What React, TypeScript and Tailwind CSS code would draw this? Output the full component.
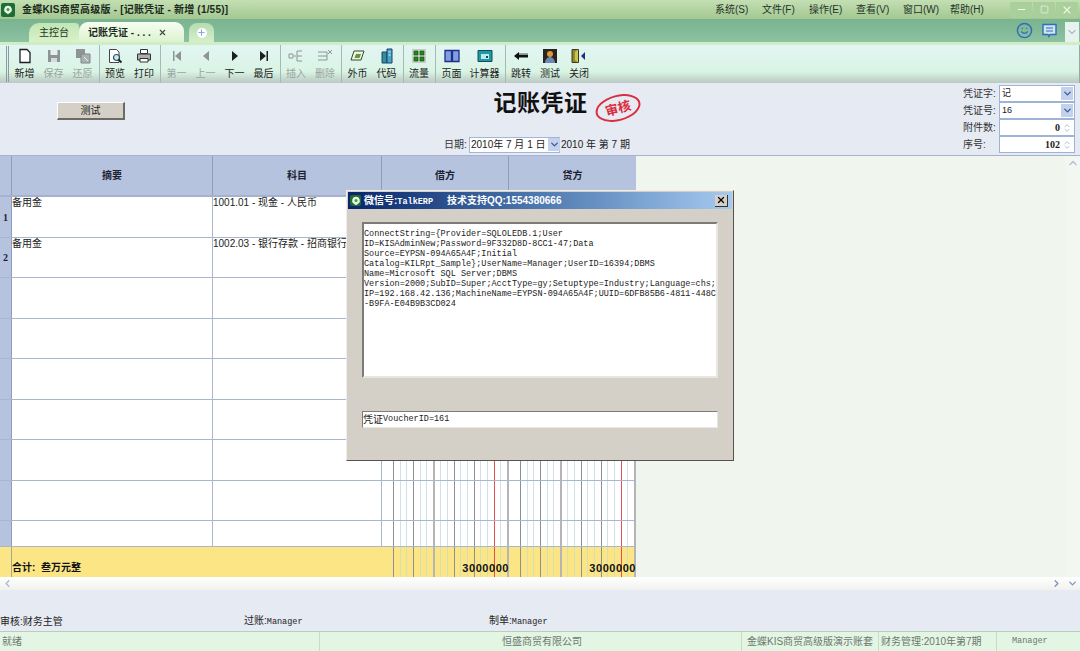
import { ReactNode } from 'react';
import { ChevronDown, ChevronLeft, ChevronRight, ChevronUp, ChevronsUpDown, Minus, Plus, Smile, Square, X } from 'lucide-react';

const cjk = "font-['Liberation_Sans','Noto_Sans_CJK_SC',sans-serif]";
const mono = "font-['Liberation_Mono','Noto_Sans_CJK_SC',monospace]";

const ToolIcon = ({ name }: { name: string }) => {
  const gray = '#8d9494';
  const dark = '#1c1f24';
  switch (name) {
    case 'new':
      return <svg width="16" height="16" viewBox="0 0 16 16"><path d="M3 1.5h7l3 3v10H3z" fill="#fff" stroke={dark} strokeWidth="1.3" /></svg>;
    case 'save':
      return <svg width="16" height="16" viewBox="0 0 16 16"><path d="M2 2h12v12H2z" fill={gray} /><path d="M4.5 2h7v5h-7z" fill="#e6eeee" /><path d="M5 10h6v4H5z" fill="#d5dbdb" /></svg>;
    case 'restore':
      return <svg width="16" height="16" viewBox="0 0 16 16"><path d="M1 1h9v9H1z" fill={gray} /><path d="M6 6h9v9H6z" fill="#a9b1b1" stroke="#7f8787" /><path d="M9 9l4 4" stroke="#e5eaea" /></svg>;
    case 'preview':
      return <svg width="16" height="16" viewBox="0 0 16 16"><path d="M2.5 1.5h7l2.5 2.5v10.5h-9.500z" fill="#fff" stroke="#444" /><circle cx="9.500" cy="9.500" r="3" fill="#cfe6ee" stroke="#28506a" strokeWidth="1.2" /><path d="M11.500 11.500l3 3" stroke="#222" strokeWidth="1.800" /></svg>;
    case 'print':
      return <svg width="16" height="16" viewBox="0 0 16 16"><path d="M4.500 1.500h7v4h-7z" fill="#fff" stroke="#333" /><path d="M1.500 6h13v6h-13z" fill="#aab0b0" stroke="#333" /><path d="M4 10.500h8v3.500H4z" fill="#fff" stroke="#333" /></svg>;
    case 'first':
      return <svg width="16" height="16" viewBox="0 0 16 16"><path d="M4 3h1.500v10H4zM12 3v10L6 8z" fill={gray} /></svg>;
    case 'prev':
      return <svg width="16" height="16" viewBox="0 0 16 16"><path d="M11 3v10L5 8z" fill={gray} /></svg>;
    case 'next':
      return <svg width="16" height="16" viewBox="0 0 16 16"><path d="M5 3v10l6-5z" fill={dark} /></svg>;
    case 'last':
      return <svg width="16" height="16" viewBox="0 0 16 16"><path d="M4 3v10l6-5zM10.500 3H12v10h-1.500z" fill={dark} /></svg>;
    case 'insert':
      return <svg width="16" height="16" viewBox="0 0 16 16"><path d="M8 8h-2M9 3h5M9 8h5M9 13h5M9 3v10" stroke={gray} fill="none" /><path d="M1 6h4v4H1z" fill="none" stroke={gray} /></svg>;
    case 'remove':
      return <svg width="16" height="16" viewBox="0 0 16 16"><path d="M1 4h9M1 8h9M1 12h9M10 4v8" stroke={gray} fill="none" /><path d="M11 2l4 4M15 2l-4 4" stroke={gray} /></svg>;
    case 'money':
      return <svg width="16" height="16" viewBox="0 0 16 16"><path d="M4 3h10l-3 9H1z" fill="#eef3e4" stroke="#3a4a2a" /><path d="M6 6h5l-1.500 4h-5z" fill="#5e9a3a" /></svg>;
    case 'code':
      return <svg width="16" height="16" viewBox="0 0 16 16"><path d="M3 4h5v11H3z" fill="#2f8f9a" stroke="#1d4a66" /><path d="M8 1h5v14H8z" fill="#4aa7c0" stroke="#1d3a7a" /><path d="M9.500 4h2M9.500 7h2" stroke="#e6f6ff" /></svg>;
    case 'flow':
      return <svg width="16" height="16" viewBox="0 0 16 16"><path d="M1 1h14v14H1z" fill="#c8cdc4" /><path d="M3 3h4v4H3zM9 3h4v4H9zM3 9h4v4H3zM9 9h4v4H9z" fill="#1d8a1d" stroke="#0e4a0e" strokeWidth=".6" /></svg>;
    case 'page':
      return <svg width="16" height="16" viewBox="0 0 16 16"><path d="M1 2.500h6.500v11H1zM8.500 2.500H15v11H8.500z" fill="#7f9fe0" stroke="#1c2f8a" strokeWidth="1.300" /></svg>;
    case 'calc':
      return <svg width="16" height="16" viewBox="0 0 16 16"><path d="M1 2.500h14v11H1z" fill="#1f9aa5" stroke="#124a5a" /><path d="M4 6h8v5H4z" fill="#bfe9ec" /><path d="M9 8h2v2H9z" fill="#124a5a" /></svg>;
    case 'jump':
      return <svg width="16" height="16" viewBox="0 0 16 16"><path d="M1 8l5-4v2.500h9v3H6V12z" fill="#111" /><path d="M6 5h9v1.500H6z" fill="#9aa5a5" /></svg>;
    case 'test':
      return <svg width="16" height="16" viewBox="0 0 16 16"><path d="M1 1h14v14H1z" fill="#2a241c" /><circle cx="8" cy="6" r="3" fill="#d99a3a" /><path d="M3 15c0-4 3-6 5-6s5 2 5 6z" fill="#6f86b8" /></svg>;
    case 'close':
      return <svg width="16" height="16" viewBox="0 0 16 16"><path d="M1 1.500h6.500v13H1z" fill="#8f8a2a" stroke="#3a3a1a" /><path d="M4 4l3-2.500v13L4 12z" fill="#c9c45a" /><path d="M10 8l4-4v8z" fill="#1c2f8a" /></svg>;
    default:
      return null;
  }
};

const toolGroups = [
  [['new', '新增', 1], ['save', '保存', 0], ['restore', '还原', 0]],
  [['preview', '预览', 1], ['print', '打印', 1]],
  [['first', '第一', 0], ['prev', '上一', 0], ['next', '下一', 1], ['last', '最后', 1]],
  [['insert', '插入', 0], ['remove', '删除', 0]],
  [['money', '外币', 1], ['code', '代码', 1]],
  [['flow', '流量', 1]],
  [['page', '页面', 1], ['calc', '计算器', 1, 'w-[37px]']],
  [['jump', '跳转', 1], ['test', '测试', 1], ['close', '关闭', 1]],
] as [string, string, number, string?][][];

const menus = ['系统(S)', '文件(F)', '操作(E)', '查看(V)', '窗口(W)', '帮助(H)'];

const Logo = ({ size = 'w-[14px] h-[14px]' }: { size?: string }) => (
  <div className={`${size} shrink-0 bg-[#1f6b3a] rounded-[2px] flex items-center justify-center`}>
    <svg viewBox="0 0 12 12" className="w-[10px] h-[10px]">
      <path d="M6 1a4.500 4.500 0 0 1 3 8L6 11 3 9a4.500 4.500 0 0 1 3-8z" fill="#e8f5d8" />
      <circle cx="6" cy="5.500" r="1.800" fill="#3b9a52" />
    </svg>
  </div>
);

// one amount column of the voucher: wide first cell and 17 digit cells
const lineClass = (i: number, onYellow: boolean) => {
  if (i === 15) return 'border-r border-r-[#e2504f]';
  if (i === 6 || i === 17) return 'border-r-2 border-r-[#b5b5b8]';
  if (i === 0 || i === 3 || i === 9 || i === 12) return 'border-r border-r-[#8b8f96]';
  return onYellow ? 'border-r border-r-[#d4dfb6]' : 'border-r border-r-[#cfe2ec]';
};

const digitCells = Array.from({ length: 18 }, (_, i) => i);

const Ledger = ({ amount, yellow = false }: { amount?: string; yellow?: boolean }) => (
  <div className="relative w-[127px] h-full flex items-end justify-end">
    <div className="absolute inset-0 flex">
      {digitCells.map((i) => (
        <div key={i} className={`${i === 0 ? 'w-[12px]' : 'flex-1'} h-full ${lineClass(i, yellow)}`} />
      ))}
    </div>
    {amount && (
      <span className="relative font-['Liberation_Sans'] font-bold text-[11px] tracking-[0.55px] leading-[14px] mb-[2px] text-[#111]">{amount}</span>
    )}
  </div>
);

const rows = [
  { no: '1', summary: '备用金', account: '1001.01 - 现金 - 人民币', h: 'h-[41px]' },
  { no: '2', summary: '备用金', account: '1002.03 - 银行存款 - 招商银行', h: 'h-[40px]' },
  { h: 'h-[41px]' },
  { h: 'h-[40px]' },
  { h: 'h-[41px]' },
  { h: 'h-[40px]' },
  { h: 'h-[41px]' },
  { h: 'h-[40px]' },
  { h: 'h-[26px]' },
];

const Field = ({ label, children }: { label: string; children: ReactNode }) => (
  <div className="flex h-[17px] items-center">
    <span className="w-[36px] text-[10px] text-[#333]">{label}:</span>
    <div className="w-[76px] h-[17px] bg-white border border-[#9fb3d8] flex items-center justify-between px-[2px] text-[9px] text-[#222]">
      {children}
    </div>
  </div>
);

const ComboArrow = () => (
  <span className="w-[12px] h-[13px] bg-[#c3d1ec] flex items-center justify-center -mr-[1px]">
    <ChevronDown size={11} strokeWidth={3} className="text-[#3d5c94]" />
  </span>
);

const dialogText = [
  'ConnectString={Provider=SQLOLEDB.1;User',
  'ID=KISAdminNew;Password=9F332D8D-8CC1-47;Data',
  'Source=EYPSN-094A65A4F;Initial',
  'Catalog=KILRpt_Sample};UserName=Manager;UserID=16394;DBMS',
  'Name=Microsoft SQL Server;DBMS',
  'Version=2000;SubID=Super;AcctType=gy;Setuptype=Industry;Language=chs;',
  'IP=192.168.42.136;MachineName=EYPSN-094A65A4F;UUID=6DFB85B6-4811-448C',
  '-B9FA-E04B9B3CD024',
];

export default function App() {
  return (
    <div className={`w-[1080px] h-[651px] overflow-hidden flex flex-col bg-[#e6eaf2] ${cjk}`}>
      {/* title bar */}
      <div className="h-[19px] shrink-0 flex items-center pl-[1px] bg-gradient-to-b from-[#c3dfb3] to-[#a3c891]">
        <Logo />
        <span className="ml-[7px] text-[10px] font-bold tracking-[0.2px] text-[#1a2a1a] whitespace-pre">金蝶KIS商贸高级版 - [记账凭证 - 新增 (1/55)]</span>
        <div className="ml-auto flex">
          {menus.map((m) => (
            <span key={m} className="w-[47px] text-[10px] text-[#26332a] whitespace-nowrap">{m}</span>
          ))}
        </div>
        <div className="flex ml-[13px] mr-[2px] gap-[1px] h-[16px]">
          <span className="w-[22px] bg-[#a9cf9a] flex items-center justify-center"><Minus size={11} className="text-white" strokeWidth={2} /></span>
          <span className="w-[22px] bg-[#a9cf9a] flex items-center justify-center"><Square size={9} className="text-[#e9f4e2]" /></span>
          <span className="w-[22px] bg-[#a9cf9a] flex items-center justify-center"><X size={12} className="text-[#e9f4e2]" strokeWidth={2.5} /></span>
        </div>
      </div>

      {/* tabs */}
      <div className="h-[23px] shrink-0 flex items-end pl-[29px] bg-gradient-to-b from-[#79b38f] to-[#8cc2a2] relative">
        <div className="w-[50px] h-[19px] rounded-tl-[10px] rounded-tr-[4px] bg-gradient-to-b from-[#c2e6b4] to-[#d9f1c8] flex items-center justify-center text-[10px] text-[#24352a]">主控台</div>
        <div className="w-[105px] h-[20px] rounded-t-[9px] bg-gradient-to-b from-[#f6fdf2] to-[#dcf3cf] flex items-center pl-[9px] text-[10px] font-bold text-[#1a2a1a] whitespace-pre">
          记账凭证 - . . .
          <X size={9} strokeWidth={3} className="ml-[7px] text-[#444]" />
        </div>
        <div className="ml-[5px] w-[25px] h-[19px] rounded-t-[8px] bg-gradient-to-b from-[#b5dcb0] to-[#d6efc8] flex items-center justify-center">
          <span className="w-[10px] h-[10px] bg-white rounded-full flex items-center justify-center"><Plus size={9} strokeWidth={3} className="text-[#8fa8df]" /></span>
        </div>
        <div className="ml-auto h-full flex items-center">
          <Smile size={17} className="text-[#2f6dba] mr-[8px]" />
          <svg width="17" height="17" viewBox="0 0 17 17" className="mr-[7px]">
            <path d="M2 2.500h13v10H9l-1 2-1-2H2z" fill="#cfe6f2" stroke="#2f6dba" strokeWidth="1.400" />
            <path d="M5 6h7M5 9h7" stroke="#2f6dba" strokeWidth="1.200" />
          </svg>
          <span className="w-[14px] h-[20px] self-end bg-[#e8f3ee] flex items-center justify-center"><ChevronDown size={12} className="text-[#6f8fc0]" /></span>
          <span className="w-[1px]" />
        </div>
      </div>
      <div className="h-[3px] shrink-0 bg-[#cfeec4]" />

      {/* toolbar */}
      <div className="h-[38px] shrink-0 flex items-stretch pl-[6px] bg-gradient-to-b from-[#e3f5f3] via-[#d9f4e4] via-70% to-[#b9c9c2] border-r border-[#9aa8a0]">
        <span className="w-[3px] my-[1px] border-x border-[#8d9aa0]" />
        {toolGroups.map((group, gi) => (
          <div key={gi} className={`flex items-stretch pl-[1px] pr-[1.5px] ${gi > 0 ? 'border-l border-[#a8b8b4]' : ''}`}>
            {group.map(([icon, label, on, w]) => (
              <div key={label} className={`${w ?? 'w-[29px]'} flex flex-col items-center pt-[3px]`}>
                <ToolIcon name={icon} />
                <span className={`mt-[4px] text-[10px] leading-[12px] whitespace-nowrap ${on ? 'text-[#222]' : 'text-[#9aa3a3]'}`}>{label}</span>
              </div>
            ))}
          </div>
        ))}
      </div>

      {/* voucher header */}
      <div className="h-[72px] shrink-0 flex bg-[#e6eaf2]">
        <div className="w-[444px] pl-[57px] pt-[19px]">
          <div className="w-[68px] h-[18px] bg-[#d4d0c8] border-r-2 border-b-2 border-r-[#6d6a64] border-b-[#6d6a64] border-t border-l border-t-white border-l-white flex items-center justify-center text-[10px] text-[#222]">测试</div>
        </div>
        <div className="w-[193px] relative flex flex-col items-center">
          <div className="mt-[4px] text-[23px] leading-[28px] font-semibold tracking-[0.5px] text-[#111] font-['Noto_Sans_CJK_SC']">记账凭证</div>
          <div className="absolute left-[151px] top-[12px] w-[46px] h-[26px] rounded-[50%] border-[2.5px] border-[#dc2d3c] -rotate-[15deg] flex items-center justify-center text-[13px] font-bold leading-none text-[#dc2d3c]">审核</div>
          <div className="mt-[21px] flex items-center self-start text-[10px] text-[#333] h-[17px] whitespace-pre">
            <span className="w-[25px]">日期:</span>
            <div className="w-[91px] h-[16px] bg-white border border-[#a3b6da] flex items-center justify-between pl-[1px] text-[#222]">
              <span>2010年 7 月 1 日</span>
              <ComboArrow />
            </div>
            <span className="ml-[1px] text-[#222]">2010 年 第 7 期</span>
          </div>
        </div>
        <div className="ml-auto pt-[2px] pr-[5px] flex flex-col">
          <Field label="凭证字">记<ComboArrow /></Field>
          <Field label="凭证号">16<ComboArrow /></Field>
          <Field label="附件数">
            <span className="ml-auto font-['Liberation_Serif'] font-bold text-[10px]">0</span>
            <ChevronsUpDown size={10} className="text-[#a8b4c8] ml-[2px]" />
          </Field>
          <Field label="序号">
            <span className="ml-auto font-['Liberation_Serif'] font-bold text-[10px]">102</span>
            <ChevronsUpDown size={10} className="text-[#a8b4c8] ml-[2px]" />
          </Field>
        </div>
      </div>

      {/* voucher grid */}
      <div className="relative h-[422px] shrink-0 flex bg-[#f0f5ee] border-t border-[#a7b3cc]">
        <div className="w-[636px] flex flex-col">
          <div className="h-[41px] flex bg-[#b6c3de] text-[10px] font-bold text-[#1c2233] border-b-2 border-[#a4b2cf]">
            <div className="w-[12px] border-r border-[#8f9dbb] bg-[#b6c3de]" />
            <div className="w-[201px] border-r border-[#8f9dbb] flex items-center justify-center">摘要</div>
            <div className="w-[169px] border-r border-[#8f9dbb] flex items-center justify-center">科目</div>
            <div className="w-[127px] border-r border-[#8f9dbb] flex items-center justify-center">借方</div>
            <div className="w-[127px] flex items-center justify-center">贷方</div>
          </div>
          {rows.map((r, i) => (
            <div key={i} className={`${r.h} flex bg-white border-b border-[#a8b6d0] last:border-b-0`}>
              <div className="w-[12px] bg-[#b6c3de] border-r border-[#8f9dbb] flex items-center justify-center font-['Liberation_Serif'] text-[10px] font-bold text-[#1c2233]">{r.no}</div>
              <div className="w-[201px] border-r border-[#a8b6d0] text-[10px] leading-[12px] text-[#222]">{r.summary}</div>
              <div className="w-[169px] border-r border-[#a8b6d0] text-[10px] leading-[12px] text-[#222] whitespace-nowrap overflow-hidden">{r.account}</div>
              <Ledger />
              <Ledger />
            </div>
          ))}
          <div className="h-[30px] flex bg-[#fbe585]">
            <div className="w-[12px] border-r border-[#a5a88c]" />
            <div className="w-[370px] flex items-end pb-[2px] text-[10px] leading-[14px] font-bold text-[#111] whitespace-pre">合计:  叁万元整</div>
            <Ledger amount="3000000" yellow />
            <Ledger amount="3000000" yellow />
          </div>
        </div>
        <div className="flex-1" />
        <div className="w-[15px] flex justify-center pt-[1px] bg-[#f3f7f1]">
          <ChevronUp size={12} strokeWidth={3} className="text-[#b4c2d8]" />
        </div>

        {/* dialog */}
        <div className="absolute left-[346px] top-[34px] w-[388px] h-[271px] bg-[#d4d0c8] border border-[#f0eee8] border-r-[#55534f] border-b-[#55534f] pt-[1px] px-[1px]">
          <div className="h-[17px] flex items-center pl-[2px] pr-[4px] bg-gradient-to-r from-[#0a246a] via-[#4f7ab0] to-[#a6caf0]">
            <Logo size="w-[11px] h-[11px]" />
            <span className="ml-[3px] text-[10px] font-bold text-white whitespace-pre">微信号:<span className={`${mono} text-[8.500px]`}>TalkERP</span>     技术支持QQ:1554380666</span>
            <span className="ml-auto w-[13px] h-[12px] bg-[#d4d0c8] border-r border-b border-[#333] flex items-center justify-center">
              <X size={10} strokeWidth={3} className="text-black" />
            </span>
          </div>
          <div className="mx-[14px] mt-[13px] h-[156px] bg-white border-2 border-[#7d7b76] border-r-[#e8e6e0] border-b-[#e8e6e0] pt-[5px] overflow-hidden">
            <div className={`${mono} text-[8.500px] leading-[10px] text-[#222] whitespace-pre`}>
              {dialogText.map((line) => <div key={line}>{line}</div>)}
            </div>
          </div>
          <div className="mx-[14px] mt-[33px] h-[17px] bg-white border border-[#7d7b76] border-r-[#e8e6e0] border-b-[#e8e6e0] flex items-center text-[10px] text-[#222]">
            凭证<span className={`${mono} text-[8.500px]`}>VoucherID=161</span>
          </div>
        </div>
      </div>

      {/* horizontal scrollbar */}
      <div className="h-[13px] shrink-0 flex items-center px-[2px] bg-gradient-to-b from-[#ffffff] to-[#f1f1ef]">
        <ChevronLeft size={11} strokeWidth={3} className="text-[#aeb9cf]" />
        <ChevronRight size={11} strokeWidth={3} className="ml-auto text-[#7f95bd]" />
        <ChevronDown size={11} strokeWidth={3} className="ml-[5px] text-[#7f95bd]" />
      </div>

      {/* sign-off row */}
      <div className="h-[41px] shrink-0 flex items-end pb-[2px] text-[10px] leading-[14px] text-[#222]">
        <span className="w-[244px]">审核:财务主管</span>
        <span className="w-[245px]">过账:<span className={`${mono} text-[8.500px]`}>Manager</span></span>
        <span>制单:<span className={`${mono} text-[8.500px]`}>Manager</span></span>
      </div>

      {/* status bar */}
      <div className="h-[20px] shrink-0 flex items-center text-[10px] text-[#6e7770] bg-[#e3f5e3] border-t border-[#bccdbd]">
        <span className="w-[320px] pl-[2px] border-r border-[#c8dcc8] h-full flex items-center">就绪</span>
        <span className="w-[421px] pl-[182px] h-full flex items-center">恒盛商贸有限公司</span>
        <span className="w-[137px] border-l border-[#c8dcc8] pl-[5px] h-full flex items-center whitespace-nowrap">金蝶KIS商贸高级版演示账套</span>
        <span className="w-[118px] border-l border-[#c8dcc8] pl-[2px] h-full flex items-center whitespace-nowrap">财务管理:2010年第7期</span>
        <span className={`flex-1 border-l border-[#c8dcc8] pl-[15px] h-full flex items-center ${mono} text-[8.500px]`}>Manager</span>
      </div>
    </div>
  );
}
